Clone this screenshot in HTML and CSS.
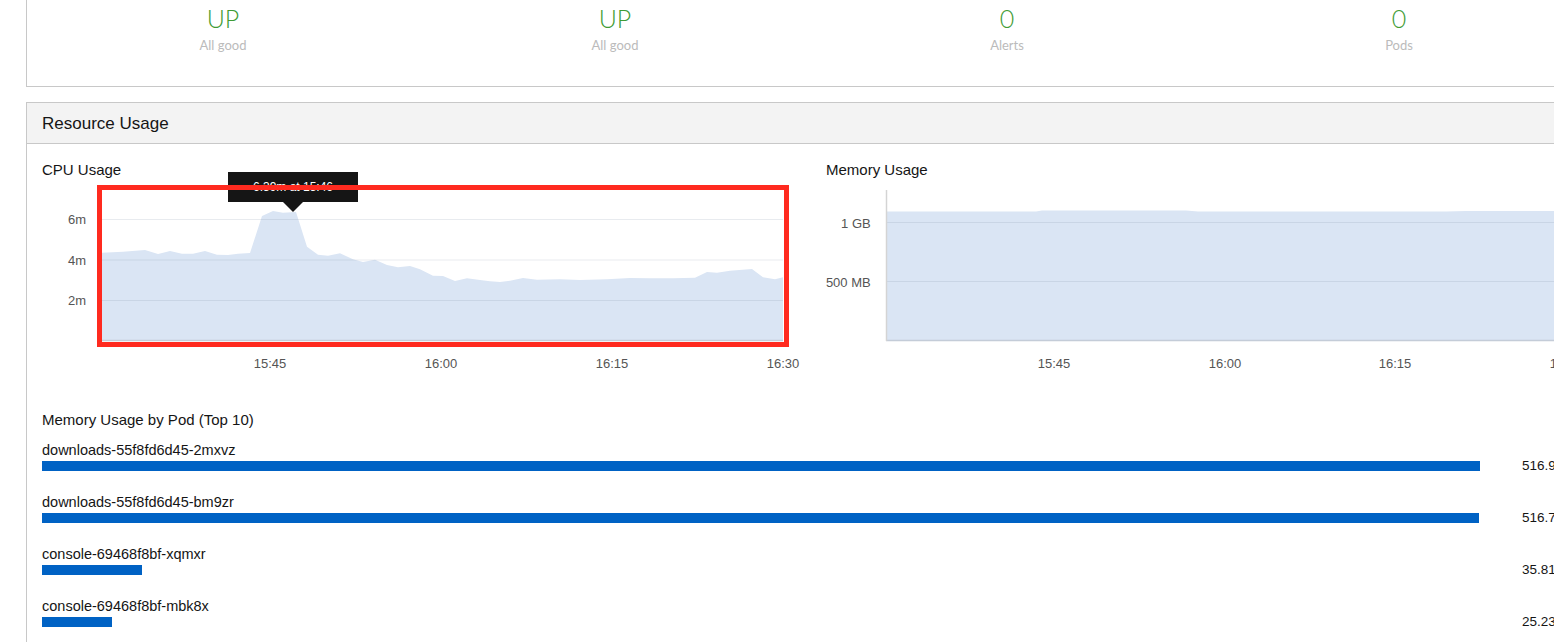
FILE: index.html
```html
<!DOCTYPE html>
<html lang="en">
<head>
<meta charset="utf-8">
<title>Cluster Status</title>
<link rel="stylesheet" href="styles.css">
</head>
<body>
<div class="page">
  <section class="card status-card">
    <div class="stats">
      <div class="stat"><div class="stat-value">UP</div><div class="stat-label">All good</div></div>
      <div class="stat"><div class="stat-value">UP</div><div class="stat-label">All good</div></div>
      <div class="stat"><div class="stat-value">0</div><div class="stat-label">Alerts</div></div>
      <div class="stat"><div class="stat-value">0</div><div class="stat-label">Pods</div></div>
    </div>
  </section>

  <section class="card usage-card">
    <header class="card-heading">Resource Usage</header>
    <div class="card-body">
      <div class="charts">
        <div class="chart-col">
          <h3 class="chart-title">CPU Usage</h3>
          <div class="chart">
            <svg width="754" height="195" viewBox="0 0 754 195">
              <path class="area" d="M60,161 L60,72.7 L81,71.7 L103,70 L116,74 L128,71 L140,73.7 L151,73.7 L163,71 L175,74.7 L186,75 L196,73.7 L208,73 L220,36 L231,31 L241,32.7 L254,32 L265,66.7 L276,74.7 L286,75.7 L298,73.3 L311,79.3 L321,82 L333,79.7 L345,85 L356,87.3 L368,86 L378,89.3 L391,95.7 L401,96 L413,101 L425,98.3 L438,100 L448,101.3 L458,102 L468,100.7 L481,98 L495,99.7 L518,99.3 L538,100 L565,99.3 L588,98 L608,98.3 L631,98.3 L653,97.7 L665,92 L675,92.7 L688,90.7 L710,89 L721,97.3 L733,99.3 L741,97.3 L741,161 Z"/>
              <line class="grid" x1="60" y1="39.5" x2="741" y2="39.5"/>
              <line class="grid" x1="60" y1="80" x2="741" y2="80"/>
              <line class="grid" x1="60" y1="120.5" x2="741" y2="120.5"/>
              <line class="baseline" x1="60" y1="160.5" x2="741" y2="160.5"/>
              <text class="tick" x="44" y="44" text-anchor="end">6m</text>
              <text class="tick" x="44" y="84.5" text-anchor="end">4m</text>
              <text class="tick" x="44" y="125" text-anchor="end">2m</text>
              <text class="tick" x="228" y="187.7" text-anchor="middle">15:45</text>
              <text class="tick" x="399" y="187.7" text-anchor="middle">16:00</text>
              <text class="tick" x="570" y="187.7" text-anchor="middle">16:15</text>
              <text class="tick" x="741" y="187.7" text-anchor="middle">16:30</text>
            </svg>
            <div class="tooltip">6.39m at 15:46</div>
            <div class="highlight"></div>
          </div>
        </div>
        <div class="chart-col">
          <h3 class="chart-title">Memory Usage</h3>
          <div class="chart">
            <svg width="754" height="195" viewBox="0 0 754 195">
              <path class="area" d="M60,161 L60,31.5 L210,31.5 L216,30.6 L360,30.6 L372,31.4 L620,31.4 L640,31 L754,31 L754,161 Z"/>
              <line class="grid" x1="60" y1="42.5" x2="754" y2="42.5"/>
              <line class="grid" x1="60" y1="101.5" x2="754" y2="101.5"/>
              <line class="baseline" x1="60" y1="160.5" x2="754" y2="160.5"/>
              <line class="axis" x1="60.5" y1="10" x2="60.5" y2="161"/>
              <text class="tick" x="44.7" y="48" text-anchor="end">1 GB</text>
              <text class="tick" x="44.7" y="107.4" text-anchor="end">500 MB</text>
              <text class="tick" x="228" y="187.7" text-anchor="middle">15:45</text>
              <text class="tick" x="399" y="187.7" text-anchor="middle">16:00</text>
              <text class="tick" x="569" y="187.7" text-anchor="middle">16:15</text>
              <text class="tick" x="740" y="187.7" text-anchor="middle">16:30</text>
            </svg>
          </div>
        </div>
      </div>

      <h3 class="chart-title pods-title">Memory Usage by Pod (Top 10)</h3>
      <div class="pod-list">
        <div class="pod-row">
          <div class="pod-name">downloads-55f8fd6d45-2mxvz</div>
          <div class="pod-track"><div class="pod-bar" style="width:100%"></div></div>
          <div class="pod-value">516.92 MiB</div>
        </div>
        <div class="pod-row">
          <div class="pod-name">downloads-55f8fd6d45-bm9zr</div>
          <div class="pod-track"><div class="pod-bar" style="width:99.93%"></div></div>
          <div class="pod-value">516.74 MiB</div>
        </div>
        <div class="pod-row">
          <div class="pod-name">console-69468f8bf-xqmxr</div>
          <div class="pod-track"><div class="pod-bar" style="width:6.95%"></div></div>
          <div class="pod-value">35.81 MiB</div>
        </div>
        <div class="pod-row">
          <div class="pod-name">console-69468f8bf-mbk8x</div>
          <div class="pod-track"><div class="pod-bar" style="width:4.88%"></div></div>
          <div class="pod-value">25.23 MiB</div>
        </div>
      </div>
    </div>
  </section>
</div>
</body>
</html>
```

FILE: styles.css
```css
html, body {
  margin: 0;
  padding: 0;
  overflow: hidden;
  background: #fff;
}

body {
  width: 1554px;
  height: 642px;
  font-family: "Liberation Sans", Arial, sans-serif;
  color: #151515;
}

.page {
  padding-left: 26px;
  width: 1570px;
}

.card {
  width: 1568px;
  border: 1px solid #c8c8c8;
  background: #fff;
}

/* status summary */
.status-card {
  margin-top: -10px;
  padding: 12px 0 33px;
}

.stats {
  display: grid;
  grid-template-columns: repeat(4, 1fr);
  text-align: center;
}

.stat-value {
  font-family: Lato, "Liberation Sans", sans-serif;
  font-weight: 300;
  font-size: 25px;
  line-height: 30px;
  color: #3f9c35;
}

.stat-label {
  margin-top: 4px;
  font-family: Lato, "Liberation Sans", sans-serif;
  font-size: 13px;
  line-height: 16px;
  color: #bbbbbb;
}

/* resource usage */
.usage-card {
  margin-top: 15px;
}

.card-heading {
  box-sizing: border-box;
  height: 41px;
  padding: 2px 15px 0;
  line-height: 38px;
  background: #f3f3f3;
  border-bottom: 1px solid #c8c8c8;
  font-size: 17px;
}

.card-body {
  padding: 16px 15px 0;
}

.charts {
  display: grid;
  grid-template-columns: 1fr 1fr;
  column-gap: 30px;
}

.chart-title {
  margin: 0;
  font-size: 15px;
  line-height: 20px;
  font-weight: normal;
  color: #151515;
}

.chart {
  position: relative;
  height: 195px;
}

.chart svg {
  display: block;
  overflow: visible;
}

.area {
  fill: #dae5f4;
}

.grid {
  stroke: rgba(110, 130, 155, 0.16);
  stroke-width: 1;
}

.baseline {
  stroke: #c4ccd8;
  stroke-width: 1.5;
}

.axis {
  stroke: #d4d4d4;
  stroke-width: 1.5;
}

.tick {
  font-family: "Liberation Sans", Arial, sans-serif;
  font-size: 13px;
  fill: #555;
}

.tooltip {
  position: absolute;
  left: 186px;
  top: -8px;
  width: 130px;
  height: 30px;
  background: #151515;
  color: #fff;
  font-size: 12px;
  line-height: 30px;
  text-align: center;
}

.tooltip::after {
  content: "";
  position: absolute;
  left: 55px;
  top: 30px;
  border-left: 10px solid transparent;
  border-right: 10px solid transparent;
  border-top: 10px solid #151515;
}

.highlight {
  position: absolute;
  left: 55px;
  top: 5px;
  width: 692px;
  height: 162px;
  box-sizing: border-box;
  border: 5px solid #ff2a1f;
}

/* pods */
.pods-title {
  margin: 35px 0 12px;
}

.pod-row {
  display: grid;
  grid-template-columns: 1fr 100px;
  grid-template-rows: 17px 10px;
  row-gap: 2px;
  margin-bottom: 23px;
}

.pod-name {
  grid-column: 1;
  grid-row: 1;
  font-size: 14.5px;
  line-height: 17px;
  color: #151515;
}

.pod-track {
  grid-column: 1;
  grid-row: 2;
  height: 10px;
}

.pod-bar {
  height: 10px;
  background: #0062c4;
}

.pod-value {
  grid-column: 2;
  grid-row: 2;
  padding-left: 42px;
  font-size: 13.5px;
  line-height: 10px;
  white-space: nowrap;
  color: #151515;
}
```
